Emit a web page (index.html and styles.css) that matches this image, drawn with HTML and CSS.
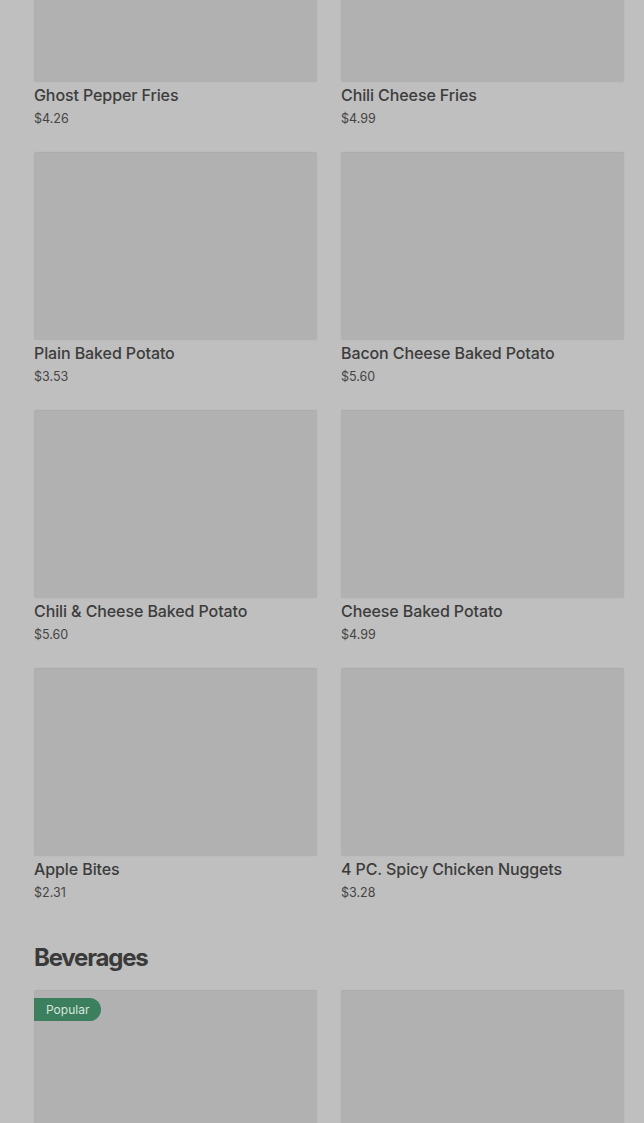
FILE: index.html
```html
<!DOCTYPE html>
<html lang="en">
<head>
    <meta charset="UTF-8">
    <meta name="viewport" content="width=device-width, initial-scale=1.0">
    <title>Menu</title>
    <link rel="stylesheet" href="styles.css">
</head>
<body>
    <div class="menu">
        <section class="category">
            <div class="item-grid">
                <div class="item">
                    <div class="item-photo"></div>
                    <div class="item-name">Ghost Pepper Fries</div>
                    <div class="item-price">$4.26</div>
                </div>
                <div class="item">
                    <div class="item-photo"></div>
                    <div class="item-name">Chili Cheese Fries</div>
                    <div class="item-price">$4.99</div>
                </div>
                <div class="item">
                    <div class="item-photo"></div>
                    <div class="item-name">Plain Baked Potato</div>
                    <div class="item-price">$3.53</div>
                </div>
                <div class="item">
                    <div class="item-photo"></div>
                    <div class="item-name">Bacon Cheese Baked Potato</div>
                    <div class="item-price">$5.60</div>
                </div>
                <div class="item">
                    <div class="item-photo"></div>
                    <div class="item-name">Chili &amp; Cheese Baked Potato</div>
                    <div class="item-price">$5.60</div>
                </div>
                <div class="item">
                    <div class="item-photo"></div>
                    <div class="item-name">Cheese Baked Potato</div>
                    <div class="item-price">$4.99</div>
                </div>
                <div class="item">
                    <div class="item-photo"></div>
                    <div class="item-name">Apple Bites</div>
                    <div class="item-price">$2.31</div>
                </div>
                <div class="item">
                    <div class="item-photo"></div>
                    <div class="item-name">4 PC. Spicy Chicken Nuggets</div>
                    <div class="item-price">$3.28</div>
                </div>
            </div>
        </section>

        <section class="category">
            <h2 class="category-title">Beverages</h2>
            <div class="item-grid">
                <div class="item">
                    <div class="item-photo">
                        <span class="badge">Popular</span>
                    </div>
                </div>
                <div class="item">
                    <div class="item-photo"></div>
                </div>
            </div>
        </section>
    </div>
</body>
</html>
```

FILE: styles.css
```css
body {
    margin: 0;
    background-color: #bfbfbf;
    font-family: 'Inter', 'Roboto', sans-serif;
    color: #3c3c3c;
    overflow: hidden;
}

/* page is scrolled part way down the menu */
.menu {
    margin-top: -106px;
    padding: 0 20px 0 34px;
}

.item-grid {
    display: grid;
    grid-template-columns: 1fr 1fr;
    column-gap: 24px;
    row-gap: 25px;
}

.item-photo {
    position: relative;
    box-sizing: border-box;
    height: 188px;
    background-color: #b1b1b1;
    border-top: 1px solid #acacac;
    border-radius: 2px;
    box-shadow: 0 0 2px rgba(0, 0, 0, 0.06);
}

.item-name {
    margin-top: 3px;
    font-size: 16px;
    font-weight: 500;
    line-height: 20px;
    letter-spacing: -0.1px;
}

.item-price {
    margin-top: 5px;
    font-size: 12.5px;
    line-height: 17px;
    color: #444;
}

.category-title {
    margin: 42px 0 17px;
    font-size: 24px;
    font-weight: 700;
    line-height: 30px;
    letter-spacing: -1.2px;
    color: #3a3a3a;
}

/* Badge over the photo */
.badge {
    position: absolute;
    top: 7px;
    left: 0;
    padding: 0 12px;
    height: 23px;
    line-height: 23px;
    font-size: 12px;
    color: #d8e6dd;
    background-color: #3b7f5e;
    border-radius: 0 12px 12px 0;
}
```
